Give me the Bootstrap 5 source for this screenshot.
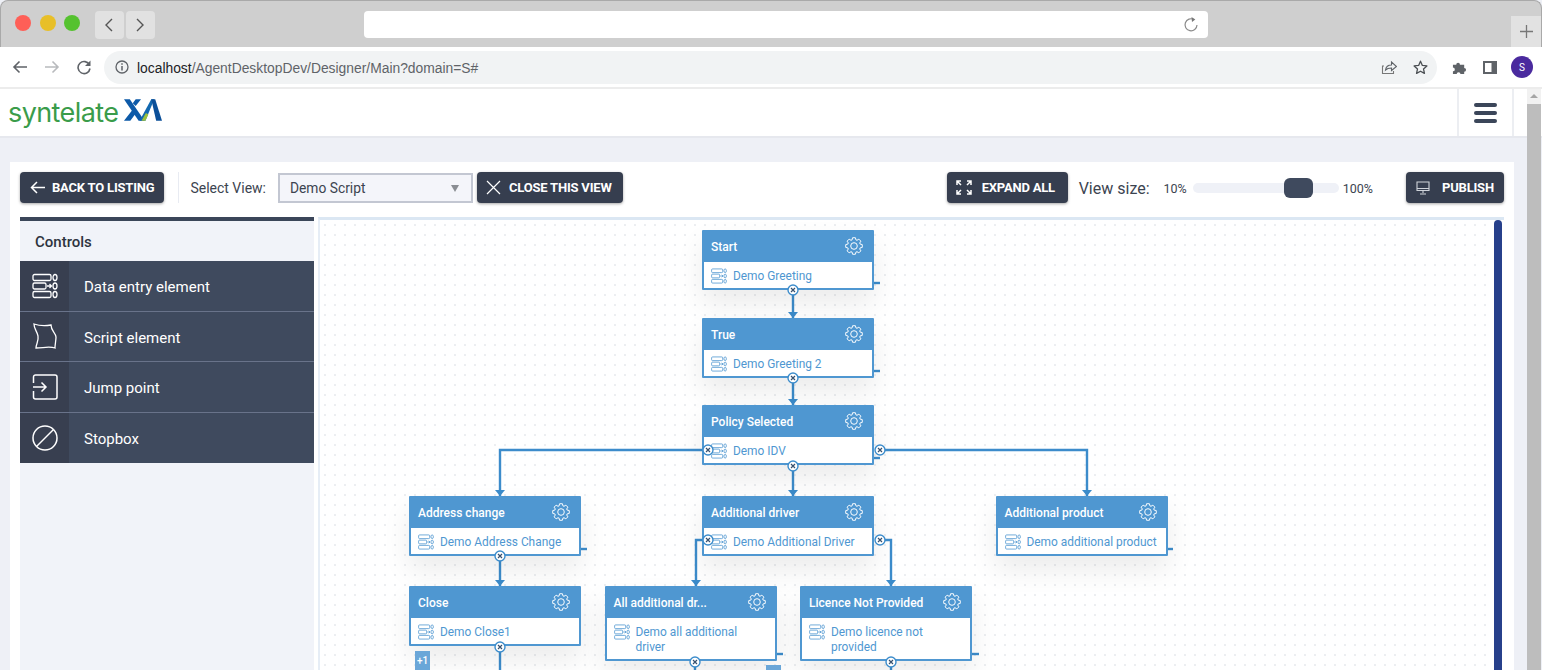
<!DOCTYPE html>
<html lang="en">
<head>
<meta charset="UTF-8" />
<title>Designer</title>
<link rel="stylesheet" href="https://cdn.jsdelivr.net/npm/bootstrap@5.3.0/dist/css/bootstrap.min.css" />
<style>
  html, body { height: 670px; overflow: hidden; }
  body { font-family: Roboto, "Liberation Sans", sans-serif; background: #eef0f6; color: #3b4657; }
  .tabstrip { height: 47px; background: #cfcfcf; border: 1px solid #a9a9a9; border-bottom: 0; border-radius: 8px 8px 0 0; padding: 10px 15px 0 14px; }
  .dot { width: 16px; height: 16px; border-radius: 50%; margin: 4px 8.5px 0 0; }
  .dot-red { background: #fe5f57; }
  .dot-amber { background: #e8bf28; }
  .dot-green { background: #55c22f; }
  .navpair { margin-left: 6px; gap: 2px; }
  .navsq { width: 29px; height: 28px; background: #e1e1e1; border-radius: 4px; }
  .tabsearch { width: 844px; height: 27px; background: #fff; border-radius: 4px; margin-left: 209px; padding-right: 9px; }
  .newtab { width: 30px; height: 31px; background: #e2e2e2; margin: 5px -15px 0 auto; }
  .toolbar { height: 42px; background: #fff; border-bottom: 2px solid #ececec; padding-left: 12px; }
  .urlbar { width: 1333px; height: 33px; background: #f1f3f4; border-radius: 17px; margin-left: 12px; padding: 0 9px 0 11px; font: 13.85px "Liberation Sans", Arial, sans-serif; color: #5f6368; }
  .urlbar b { font-weight: 400; color: #202124; }
  .urltext { padding-top: 1px; }
  .puzzleicon { margin-left: 15px; }
  .panelicon { margin-left: 16px; }
  .avatar { width: 22px; height: 22px; background: #4a2a9e; font-size: 10px; margin-left: 14px; }
  .appbar { height: 49px; background: #fff; border-bottom: 2px solid #e6e8ee; }
  .menucell { width: 57px; height: 47px; border-left: 2px solid #eceef2; border-right: 2px solid #eceef2; margin-left: auto; margin-right: 28px; }
  .menuline { width: 23px; height: 4px; background: #3b4659; }
  .logotxt { font: 400 27px/1 Inter, sans-serif; color: #3a9c4a; letter-spacing: -0.6px; width: 112px; white-space: nowrap; }
  .logomark { margin-left: 3px; margin-top: -5px; }
  .mainzone { padding: 24px 0 0 10px; width: 1527px; }
  .sheet { width: 1504px; height: 510px; background: #fff; padding: 10px 10px 0 10px; overflow: hidden; }
  .darkbtn { height: 31px; background: #363e4f; color: #fff; border: 0; border-radius: 4px; font: 700 13px Roboto, sans-serif; box-shadow: 0 1px 3px rgba(0,0,0,.35); padding: 0 10px; letter-spacing: -0.2px; white-space: nowrap; }
  .backbtn { gap: 7px; }
  .closebtn { padding: 0 10px 0 9px; width: 146px; }
  .expandbtn { width: 121px; gap: 10px; padding-left: 9px; }
  .publishbtn { margin-left: 33px; width: 98px; gap: 12px; padding-left: 10px; }
  .vsep { width: 1px; height: 31px; background: #e8ebf2; margin: 0 11px 0 14px; }
  .viewlabel { font-size: 14px; color: #3c4450; padding-top: 1px; }
  .viewpick { width: 195px; height: 30px; background: #f4f5fa; border: 2px solid #c3c7d2; font-size: 13.8px; color: #3c4450; padding: 1px 12px 0 10px; margin: 0 4px 0 12px; }
  .viewpick i { border-left: 4px solid transparent; border-right: 4px solid transparent; border-top: 7px solid #8a8d93; }
  .sizelabel { font-size: 16px; color: #3c4450; margin: 2px 0 0 11px; }
  .pct { font-size: 12.5px; color: #3c4450; margin-top: 4px; }
  .pct-low { margin-left: 14px; }
  .track { width: 146px; height: 10px; background: #eff1f7; border-radius: 5px; margin: 0 4px 0 6px; position: relative; }
  .knob { position: absolute; left: 91px; top: -5px; width: 29px; height: 20px; border-radius: 6px; background: #3f4a5e; }
  .workrow { margin-top: 14px; gap: 4px; }
  .sidepane { width: 294px; height: 480px; background: #f1f3f9; border-top: 4px solid #3b4659; flex: none; }
  .sidehead { height: 40px; font-size: 15px; font-weight: 500; color: #2d3440; padding: 3px 0 0 15px; }
  .ctrlrow { height: 50.5px; background: #3f4a5e; color: #fff; border-bottom: 1px solid #69738a; font-size: 15px; }
  .ctrlrow:last-child { border-bottom: 0; }
  .ctrlicon { width: 49px; height: 100%; background: #383f50; color: #fff; }
  .ctrlname { margin-left: 15px; padding-top: 3px; }
  .canvas { flex: 1; height: 480px; position: relative; border-top: 3px solid #dbe7f3; border-left: 2px solid #e6edf6;
    background-color: #fff; background-image: radial-gradient(#d6dae0 0.6px, transparent 0.8px); background-size: 10px 10px; overflow: hidden; }
  .wires { position: absolute; left: 0; top: 0; }
  .flownode { position: absolute; width: 172px; background: #fff; border: 2px solid #4f97d1; box-shadow: 0 14px 28px rgba(0,0,0,.08); border-radius: 1px; }
  .flowhead { height: 30px; background: #4f97d1; color: #fff; font-size: 12px; font-weight: 500; padding: 0 9px 0 7px; }
  .flowhead svg { margin-top: -2px; }
  .flowbody { color: #4f97d1; font-size: 11.9px; line-height: 15px; padding: 5px 6px 4px 7px; }
  .flowbody svg { flex: none; margin: 1px 6px 0 0; }
  .flowbody span { padding-top: 2px; }
  .plusone { position: absolute; width: 15px; height: 19px; background: #6aa6d8; color: #fff; font-size: 10px; font-weight: 500; text-align: center; line-height: 19px; }
  .markdot { position: absolute; width: 12px; height: 12px; z-index: 3; }
  .vscroll { position: absolute; right: 2px; top: 0; width: 8px; height: 477px; background: #27408b; border-radius: 4px; }
  .pagebar { position: absolute; left: 1527px; top: 89px; width: 14px; height: 581px; background: #bdbdbd; }
  .pagebar i { display: block; height: 15px; background: #f1f1f1; position: relative; }
  .pagebar i::after { content: ""; position: absolute; left: 3px; top: 5px; border-left: 4px solid transparent; border-right: 4px solid transparent; border-bottom: 4px solid #a5a5a5; }
</style>
</head>
<body class="position-relative">
<svg width="0" height="0" class="position-absolute">
  <defs>
    <symbol id="entry" viewBox="0 0 26 26">
      <g fill="none" stroke="currentColor" stroke-width="1.3">
        <rect x="1" y="1.500" width="18" height="6" rx="1.500"/><rect x="1" y="10" width="13" height="6" rx="1.500"/><rect x="1" y="18.500" width="18" height="6" rx="1.500"/>
        <path d="M15 13h4M17.500 11l2 2-2 2"/>
        <ellipse cx="23" cy="4.500" rx="2" ry="3"/><ellipse cx="23" cy="13" rx="2" ry="3"/><ellipse cx="23" cy="21.500" rx="2" ry="3"/>
      </g>
    </symbol>
    <symbol id="gear" viewBox="0 0 24 24">
      <g fill="none" stroke="#fff" stroke-width="1.3" stroke-linejoin="round">
        <path id="gearpath"/>
        <circle cx="12" cy="12" r="4.4"/>
      </g>
    </symbol>
    <symbol id="xmark" viewBox="0 0 12 12">
      <circle cx="6" cy="6" r="5" fill="#fff" stroke="#3c8ccb" stroke-width="1.4"/>
      <path d="M4 4l4 4M8 4l-4 4" stroke="#35506f" stroke-width="1.2" fill="none"/>
    </symbol>
  </defs>
</svg>

<div class="tabstrip d-flex align-items-start">
  <span class="dot dot-red"></span>
  <span class="dot dot-amber"></span>
  <span class="dot dot-green"></span>
  <div class="d-flex navpair">
    <div class="navsq d-flex align-items-center justify-content-center"><svg width="10" height="16" viewBox="0 0 10 16"><path d="M8 2L2 8l6 6" fill="none" stroke="#555" stroke-width="1.4"/></svg></div>
    <div class="navsq d-flex align-items-center justify-content-center"><svg width="10" height="16" viewBox="0 0 10 16"><path d="M2 2l6 6-6 6" fill="none" stroke="#555" stroke-width="1.4"/></svg></div>
  </div>
  <div class="tabsearch d-flex align-items-center justify-content-end">
    <svg width="16" height="16" viewBox="0 0 16 16"><path d="M11 2.6A6 6 0 1 0 14 8" fill="none" stroke="#8a8a8a" stroke-width="1.2"/><path d="M8.5 0l3.8 2.6L9 5z" fill="#777"/></svg>
  </div>
  <div class="newtab d-flex align-items-center justify-content-center">
    <svg width="15" height="15" viewBox="0 0 15 15"><path d="M7.5 1v13M1 7.5h13" stroke="#777" stroke-width="1.3"/></svg>
  </div>
</div>

<div class="toolbar d-flex align-items-center">
  <svg width="16" height="14" viewBox="0 0 16 14"><path d="M15 7H2M7.5 1.5L2 7l5.5 5.5" fill="none" stroke="#5f6368" stroke-width="1.6"/></svg>
  <svg class="ms-3" width="16" height="14" viewBox="0 0 16 14"><path d="M1 7h13M8.5 1.5L14 7l-5.5 5.5" fill="none" stroke="#b8babd" stroke-width="1.6"/></svg>
  <svg class="ms-3" width="16" height="16" viewBox="0 0 16 16"><path d="M13.5 6A6 6 0 1 0 14 9.5" fill="none" stroke="#5f6368" stroke-width="1.6"/><path d="M14.5 1.5V7H9z" fill="#5f6368"/></svg>
  <div class="urlbar d-flex align-items-center">
    <svg width="14" height="14" viewBox="0 0 14 14"><circle cx="7" cy="7" r="6" fill="none" stroke="#5f6368" stroke-width="1.3"/><path d="M7 6v4.500M7 3.300v1.500" stroke="#5f6368" stroke-width="1.5"/></svg>
    <span class="ms-2 urltext"><b>localhost</b>/AgentDesktopDev/Designer/Main?domain=S#</span>
    <svg class="ms-auto" width="16" height="16" viewBox="0 0 16 16"><path d="M3 7H1.5v7.5h11V12" fill="none" stroke="#777" stroke-width="1.1"/><path d="M4.5 11c.5-3.500 3-5 6-5V3l5 4.500-5 4V9c-2.500 0-4.500.5-6 2z" fill="none" stroke="#5f6368" stroke-width="1.1"/></svg>
    <svg class="ms-3" width="15" height="15" viewBox="0 0 16 16"><path d="M8 1.300l2 4.500 4.800.5-3.600 3.200 1 4.800L8 12l-4.200 2.300 1-4.800L1.200 6.300 6 5.800z" fill="none" stroke="#4a4e52" stroke-width="1.4" stroke-linejoin="round"/></svg>
  </div>
  <svg class="puzzleicon" width="15" height="15" viewBox="0 0 16 16"><path d="M1 5h3.500a2 2 0 1 1 4 0H13v3.500a2 2 0 1 1 0 4V15H9a2 2 0 1 0-4 0H1v-3a2 2 0 1 0 0-4z" fill="#5f6368"/></svg>
  <svg class="panelicon" width="14" height="13" viewBox="0 0 14 13"><path d="M0 0h14v13H0z" fill="#5f6368"/><path d="M2 2h6.5v9H2z" fill="#fff"/></svg>
  <div class="avatar rounded-circle d-flex align-items-center justify-content-center text-white">S</div>
</div>

<div class="appbar d-flex align-items-center">
  <div class="d-flex align-items-center ms-2">
    <span class="logotxt">syntelate</span>
    <svg class="logomark" width="39" height="24" viewBox="0 0 40 24">
      <path d="M1 1h6l15 22h-6z" fill="#0d5aa8"/>
      <path d="M1 23L10 11.500l3 4L7.500 23zM13 8l5.500-7h-5.500l-3 4z" fill="#0d5aa8"/>
      <path d="M17 23L29 1h3L23 23z" fill="#1268b0"/>
      <path d="M19 23l4.500-8 2.500 1.500-3 6.500z" fill="#9cc13c"/>
      <path d="M29 1h4l7 22h-6z" fill="#0b4f99"/>
    </svg>
  </div>
  <div class="menucell d-flex flex-column align-items-center justify-content-center gap-1">
    <span class="menuline d-block rounded"></span>
    <span class="menuline d-block rounded"></span>
    <span class="menuline d-block rounded"></span>
  </div>
</div>

<div class="mainzone">
  <div class="sheet">
    <div class="d-flex align-items-center">
      <button class="darkbtn backbtn d-flex align-items-center"><svg width="15" height="13" viewBox="0 0 15 13"><path d="M15 6.500H1.500M7 1L1.500 6.500 7 12" fill="none" stroke="#fff" stroke-width="1.5"/></svg>BACK TO LISTING</button>
      <span class="vsep"></span>
      <span class="viewlabel">Select View:</span>
      <div class="viewpick d-flex align-items-center justify-content-between"><span>Demo Script</span><i></i></div>
      <button class="darkbtn closebtn d-flex align-items-center gap-2"><svg width="15" height="15" viewBox="0 0 15 15"><path d="M1 1l13 13M14 1L1 14" stroke="#fff" stroke-width="1.2"/></svg>CLOSE THIS VIEW</button>
      <button class="darkbtn expandbtn d-flex align-items-center ms-auto"><svg width="16" height="15" viewBox="0 0 16 15"><path d="M1 5V1h4M11 1h4v4M15 10v4h-4M5 14H1v-4M1 1l4 4M15 1l-4 4M15 14l-4-4M1 14l4-4" fill="none" stroke="#fff" stroke-width="1.5"/></svg>EXPAND ALL</button>
      <span class="sizelabel">View size:</span>
      <span class="pct pct-low">10%</span>
      <div class="track"><span class="knob"></span></div>
      <span class="pct">100%</span>
      <button class="darkbtn publishbtn d-flex align-items-center"><svg width="14" height="14" viewBox="0 0 14 14"><path d="M1 1h12v8.500H1zM1 7.500h12M7 9.500V12M4 13h6" fill="none" stroke="#cfd3da" stroke-width="1.1"/></svg>PUBLISH</button>
    </div>

    <div class="workrow d-flex">
      <div class="sidepane">
        <div class="sidehead d-flex align-items-center">Controls</div>
        <div class="ctrlrow d-flex align-items-center">
          <div class="ctrlicon d-flex align-items-center justify-content-center"><svg width="26" height="26"><use href="#entry"/></svg></div><span class="ctrlname">Data entry element</span>
        </div>
        <div class="ctrlrow d-flex align-items-center">
          <div class="ctrlicon d-flex align-items-center justify-content-center"><svg width="24" height="26" viewBox="0 0 24 26"><path d="M1 1C7 3 12 3 18 2C18 8 23 10 23 14C23 18 22 21 22 25C16 23 10 25 3 25C3 21 6 18 5 13C4 8 1 6 1 1z" fill="none" stroke="#fff" stroke-width="1.3"/></svg></div><span class="ctrlname">Script element</span>
        </div>
        <div class="ctrlrow d-flex align-items-center">
          <div class="ctrlicon d-flex align-items-center justify-content-center"><svg width="26" height="26" viewBox="0 0 26 26"><path d="M1.500 9V3a2 2 0 0 1 2-2H23a2 2 0 0 1 2 2v20a2 2 0 0 1-2 2H3.500a2 2 0 0 1-2-2v-6M1 13h13M9.500 8.500L14 13l-4.500 4.500" fill="none" stroke="#fff" stroke-width="1.5"/></svg></div><span class="ctrlname">Jump point</span>
        </div>
        <div class="ctrlrow d-flex align-items-center">
          <div class="ctrlicon d-flex align-items-center justify-content-center"><svg width="26" height="26" viewBox="0 0 26 26"><circle cx="13" cy="13" r="12" fill="none" stroke="#fff" stroke-width="1.5"/><path d="M4.500 21.500l17-17" stroke="#fff" stroke-width="1.5"/></svg></div><span class="ctrlname">Stopbox</span>
        </div>
      </div>

      <!-- inner corner of the canvas is x=320 y=220 on the page -->
      <div class="canvas" id="canvas">
        <svg class="wires" id="wires" width="1190" height="480" viewBox="320 220 1190 480"></svg>
        <div class="vscroll"></div>
      </div>
    </div>
  </div>
</div>

<div class="pagebar"><i></i></div>

<script>
  // x,y = page coordinates of the node box
  var nodes = [
    { x: 702, y: 230, title: "Start", body: "Demo Greeting" },
    { x: 702, y: 318, title: "True", body: "Demo Greeting 2" },
    { x: 702, y: 405, title: "Policy Selected", body: "Demo IDV" },
    { x: 409, y: 496, title: "Address change", body: "Demo Address Change" },
    { x: 702, y: 496, title: "Additional driver", body: "Demo Additional Driver" },
    { x: 995.5, y: 496, title: "Additional product", body: "Demo additional product" },
    { x: 409, y: 586, title: "Close", body: "Demo Close1" },
    { x: 604.5, y: 586, title: "All additional dr...", body: "Demo all additional driver" },
    { x: 800, y: 586, title: "Licence Not Provided", body: "Demo licence not provided" }
  ];
  var ox = 320, oy = 220;
  var canvas = document.getElementById("canvas");
  var wires = document.getElementById("wires");

  // gear outline: 8 teeth
  var gear = "";
  for (var i = 0; i < 8; i++) {
    var a = (i * Math.PI) / 4;
    [[-0.3, 8.6], [-0.17, 11.2], [0.17, 11.2], [0.3, 8.6]].forEach(function (p, j) {
      gear += (i === 0 && j === 0 ? "M" : "L") + (12 + p[1] * Math.cos(a + p[0])).toFixed(2) + " " + (12 + p[1] * Math.sin(a + p[0])).toFixed(2);
    });
  }
  document.getElementById("gearpath").setAttribute("d", gear + "z");

  nodes.forEach(function (n) {
    var el = document.createElement("div");
    el.className = "flownode";
    el.style.left = n.x - ox + "px";
    el.style.top = n.y - oy + "px";
    el.innerHTML =
      '<div class="flowhead d-flex align-items-center justify-content-between"><span>' + n.title +
      '</span><svg width="18" height="18"><use href="#gear"/></svg></div>' +
      '<div class="flowbody d-flex"><svg width="16" height="16"><use href="#entry"/></svg><span>' + n.body + "</span></div>";
    canvas.appendChild(el);
  });

  var paths = [
    "M793 290V318", "M793 378V405", "M793 465V496",
    "M708 450H500V496", "M880 450H1087V496",
    "M500 556V586",
    "M708 540H696V586", "M880 540H891V586",
    "M500 648V670", "M695 662V670", "M891 662V670",
    "M873 283H880", "M873 371H880", "M873 458H880",
    "M579 549H587", "M1166 549H1173", "M775 654H783", "M971 654H979"
  ];
  var arrows = [[793,318],[793,405],[793,496],[500,496],[1087,496],[500,586],[696,586],[891,586]];
  var marks = [[793,290],[793,378],[793,466],[708,450],[880,450],[500,556],[708,540],[880,540],[500,647],[695,662],[891,662]];

  var svg = "";
  paths.forEach(function (d) {
    svg += '<path d="' + d + '" fill="none" stroke="#3c8ccb" stroke-width="2.4"/>';
  });
  arrows.forEach(function (a) {
    svg += '<path d="M' + (a[0] - 5) + " " + (a[1] - 6) + 'h10l-5 6z" fill="#3c8ccb"/>';
  });
  wires.innerHTML = svg;

  // markers sit above the nodes, so they go in a second layer
  marks.forEach(function (m) {
    var s = document.createElement("div");
    s.className = "markdot";
    s.style.left = m[0] - ox - 6 + "px";
    s.style.top = m[1] - oy - 6 + "px";
    s.innerHTML = '<svg width="12" height="12" class="d-block"><use href="#xmark"/></svg>';
    canvas.appendChild(s);
  });

  [[415, 651, "+1"], [766, 665, ""]].forEach(function (b) {
    var s = document.createElement("div");
    s.className = "plusone";
    s.style.left = b[0] - ox + "px";
    s.style.top = b[1] - oy + "px";
    s.textContent = b[2];
    canvas.appendChild(s);
  });
</script>
<script src="https://cdn.jsdelivr.net/npm/bootstrap@5.3.0/dist/js/bootstrap.bundle.min.js"></script>
</body>
</html>
